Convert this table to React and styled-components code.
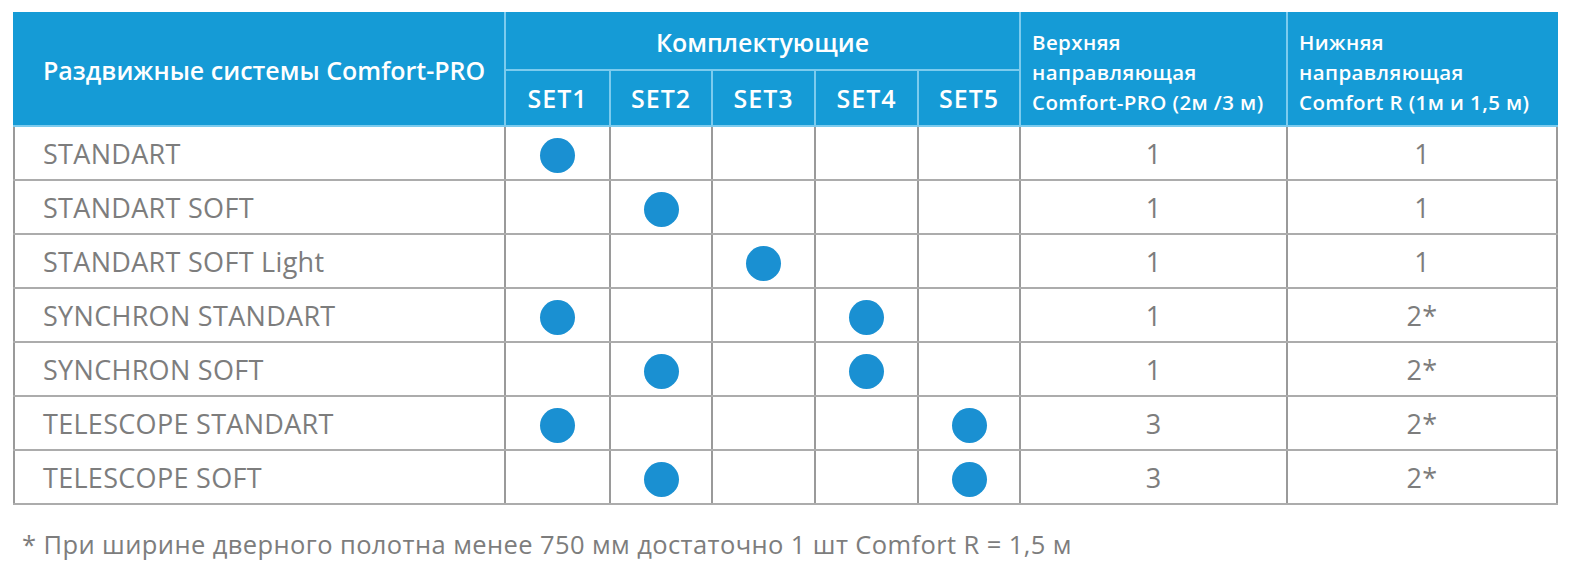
import React from "react";
import styled, { createGlobalStyle } from "styled-components";

const Global = createGlobalStyle`
  html, body { margin: 0; padding: 0; background: #fff; }
  body { font-family: "Open Sans", "Liberation Sans", sans-serif; }
`;

const Page = styled.div`
  width: 1576px;
  height: 570px;
  padding: 12px 0 0 13px;
  box-sizing: border-box;
`;

const Table = styled.table`
  border-collapse: collapse;
  table-layout: fixed;
  width: 1543px;
  font-family: "Open Sans", "Liberation Sans", sans-serif;
`;

const Col = styled.col`
  width: ${p => p.$w}px;
`;

const HeadCell = styled.th`
  background: #159bd6;
  color: #fff;
  font-weight: 600;
  font-size: ${p => (p.$small ? "20.5px" : "25px")};
  line-height: ${p => (p.$small ? "30px" : "26px")};
  letter-spacing: ${p => (p.$small ? "0.4px" : p.$wide ? "1px" : "0")};
  text-align: ${p => (p.$left ? "left" : "center")};
  vertical-align: ${p => (p.$top ? "top" : "middle")};
  padding: ${p => (p.$small ? "13px 4px 0 11px" : p.$left ? "0 0 0 28px" : "0")};
  height: ${p => p.$h || 56}px;
  border: 2px solid #7ccbee;
  border-top-color: #159bd6;
  box-sizing: border-box;
  white-space: nowrap;
  &:first-child { border-left-color: #159bd6; }
  &:last-child { border-right-color: #159bd6; }
`;

const Row = styled.tr`
  height: 54px;
`;

const Cell = styled.td`
  border: 2px solid #9a9a9a;
  border-top-color: #bcbcbc;
  border-bottom-color: #acacac;
  color: #7d7d7d;
  font-size: 27px;
  letter-spacing: 0.3px;
  text-align: ${p => (p.$left ? "left" : "center")};
  padding: ${p => (p.$left ? "0 0 0 28px" : "0")};
  vertical-align: middle;
  white-space: nowrap;
`;

const Dot = styled.span`
  display: inline-block;
  width: 35px;
  height: 35px;
  border-radius: 50%;
  background: #1a90d2;
  vertical-align: middle;
`;

const Note = styled.p`
  margin: 22px 0 0 9px;
  color: #7d7d7d;
  font-size: 25.5px;
  letter-spacing: 0.4px;
  font-family: "Open Sans", "Liberation Sans", sans-serif;
  white-space: nowrap;
`;

const widths = [491, 105, 102, 103, 103, 102, 267, 270];

const rows = [
  ["STANDART", [1], "1", "1"],
  ["STANDART SOFT", [2], "1", "1"],
  ["STANDART SOFT Light", [3], "1", "1"],
  ["SYNCHRON STANDART", [1, 4], "1", "2*"],
  ["SYNCHRON SOFT", [2, 4], "1", "2*"],
  ["TELESCOPE STANDART", [1, 5], "3", "2*"],
  ["TELESCOPE SOFT", [2, 5], "3", "2*"],
];

export default function App() {
  return (
    <Page>
      <Global />
      <Table>
        <colgroup>
          {widths.map((w, i) => (
            <Col key={i} $w={w} />
          ))}
        </colgroup>
        <thead>
          <tr>
            <HeadCell rowSpan={2} $left $h={57}>Раздвижные системы Comfort-PRO</HeadCell>
            <HeadCell colSpan={5} $h={57}>Комплектующие</HeadCell>
            <HeadCell rowSpan={2} $small $left $top>
              Верхняя<br />направляющая<br />Comfort-PRO (2м /3 м)
            </HeadCell>
            <HeadCell rowSpan={2} $small $left $top>
              Нижняя<br />направляющая<br />Comfort R (1м и 1,5 м)
            </HeadCell>
          </tr>
          <tr>
            {[1, 2, 3, 4, 5].map(n => (
              <HeadCell key={n} $h={56} $wide>SET{n}</HeadCell>
            ))}
          </tr>
        </thead>
        <tbody>
          {rows.map(([name, sets, up, low]) => (
            <Row key={name}>
              <Cell $left>{name}</Cell>
              {[1, 2, 3, 4, 5].map(n => (
                <Cell key={n}>{sets.includes(n) ? <Dot /> : null}</Cell>
              ))}
              <Cell>{up}</Cell>
              <Cell>{low}</Cell>
            </Row>
          ))}
        </tbody>
      </Table>
      <Note>* При ширине дверного полотна менее 750 мм достаточно 1 шт Comfort R = 1,5 м</Note>
    </Page>
  );
}
